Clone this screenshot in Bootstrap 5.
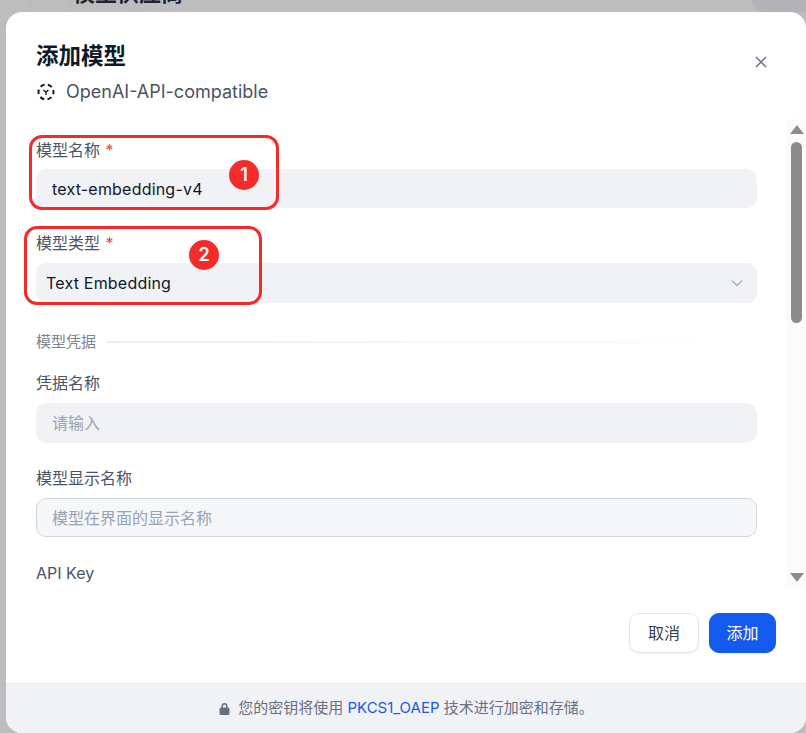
<!DOCTYPE html>
<html lang="zh-CN">
<head>
  <meta charset="UTF-8">
  <title>添加模型</title>
  <link href="https://cdn.jsdelivr.net/npm/bootstrap@5.3.0/dist/css/bootstrap.min.css" rel="stylesheet">
  <style>
    html, body { height: 733px; overflow: hidden; }
    body { background: #bcbdbc; font-family: Inter, "Noto Sans CJK SC", sans-serif; color: #354052; }
    .backdrop-page { height: 733px; padding: 12px 0 0 6px; position: relative; }
    .behind-panel { position: absolute; left: 30px; top: 0; width: 41px; height: 12px; border: solid #b4b5b4; border-width: 0 1px; }
    .behind-title { position: absolute; left: 73px; top: -23px; font-size: 22px; font-weight: 700; color: #1c2433; }
    .behind-pill { position: absolute; right: 0; top: -20px; width: 54px; height: 32px; background: #b1b3b6; border-radius: 0 0 0 12px; }
    .dialog-box { position: relative; height: 721px; background: #fff; border-radius: 16px; overflow: hidden; }
    .dialog-head { height: 107px; padding: 30px 30px 0; position: relative; }
    .dialog-title { font-size: 22.5px; line-height: 28px; font-weight: 700; color: #101828; margin: 0 0 9px; }
    .provider-line { font-size: 18px; line-height: 26px; color: #495464; gap: 10px; }
    .close-x { position: absolute; left: 749px; top: 44px; width: 12px; height: 12px; }
    .scroll-area { height: 468px; }
    .form-col { width: 781px; padding: 0 30px; overflow: hidden; }
    .field-wrap { height: 94px; padding-top: 19px; }
    .field-wrap.first { padding-top: 20px; }
    .field-wrap.tight { height: 95px; }
    .field-label { font-size: 16px; line-height: 22px; color: #495464; margin-bottom: 9px; display: block; }
    .field-wrap.first .field-label { margin-bottom: 8px; }
    .field-label i { color: #f04438; font-style: normal; margin-left: 1px; }
    .soft-input.form-control, .soft-input.form-select { height: 40px; border-radius: 10px; background-color: #f1f2f6; border: 1px solid #f1f2f6; font-size: 16px; letter-spacing: .2px; color: #101828; padding: 0 15px; box-shadow: none; }
    .soft-input.form-control.short-field { height: 39px; }
    .soft-input.form-select { padding-left: 9px; background-image: url("data:image/svg+xml,%3csvg xmlns='http://www.w3.org/2000/svg' viewBox='0 0 12 8'%3e%3cpath fill='none' stroke='%23a9aeb8' stroke-width='1.3' d='M1 1.5l5 5 5-5'/%3e%3c/svg%3e"); background-position: right 13px center; background-size: 12px 8px; }
    .soft-input.outlined { background-color: #f6f7f9; border-color: #d0d5dd; }
    .soft-input::placeholder { color: #98a2b3; opacity: 1; letter-spacing: 0; }
    .rule-row { height: 46px; font-size: 15px; color: #7a8494; gap: 10px; padding-top: 24px; }
    .rule-line { height: 2px; flex: 1; background: linear-gradient(to right, #eceef1, #fff); }
    .fake-scroll { width: 19px; background: #fbfbfb; position: relative; }
    .scroll-up { position: absolute; left: 3px; top: 6px; width: 0; height: 0; border: 7px solid transparent; border-top: 0; border-bottom: 9px solid #8c8c8c; }
    .scroll-down { position: absolute; left: 3px; top: 454px; width: 0; height: 0; border: 7px solid transparent; border-bottom: 0; border-top: 9px solid #8c8c8c; }
    .scroll-thumb { position: absolute; left: 4px; top: 23px; width: 11px; height: 181px; border-radius: 6px; background: #8c8c8c; }
    .action-row { height: 96px; padding: 26px 30px 0 0; gap: 10px; }
    .btn-cancel, .btn-add { height: 40px; border-radius: 10px; font-size: 16px; padding: 0; box-shadow: 0 1px 2px rgba(16,24,40,.06); }
    .btn-cancel { width: 70px; background: #fff; border: 1px solid #e1e3e8; color: #354052; }
    .btn-add { width: 67px; background: #155aef; border: 1px solid #155aef; color: #fff; }
    .lock-foot { height: 50px; background: #f1f2f6; border-top: 1px solid #e8eaee; font-size: 15px; color: #676f83; gap: 7px; }
    .lock-foot a { color: #155aef; text-decoration: none; }
    .mark-box { position: absolute; border: 3px solid #f52b2b; border-radius: 13px; pointer-events: none; }
    .mark-dot { position: absolute; width: 30px; height: 30px; border-radius: 50%; background: #f52b2b; color: #fff; font-size: 18px; font-weight: 600; line-height: 30px; text-align: center; }
  </style>
</head>
<body>
  <div class="backdrop-page">
    <div class="behind-panel"></div>
    <div class="behind-title">模型供应商</div>
    <div class="behind-pill"></div>

    <div class="dialog-box d-flex flex-column">
      <div class="dialog-head">
        <h1 class="dialog-title">添加模型</h1>
        <div class="provider-line d-flex align-items-center">
          <svg width="20" height="20" viewBox="0 0 20 20" fill="none" stroke="#101828" stroke-width="2">
            <circle cx="10" cy="10" r="7.500" stroke-dasharray="4.500 3.350" stroke-dashoffset="2.200"/>
            <path d="M7.500 8l2.500 2 2.500-2M10 10v3" stroke-width="1.400"/>
          </svg>
          <span>OpenAI-API-compatible</span>
        </div>
        <svg class="close-x" viewBox="0 0 12 12" fill="none" stroke="#676f83" stroke-width="1.500"><path d="M1 1l10 10M11 1L1 11"/></svg>
      </div>

      <div class="scroll-area d-flex">
        <div class="form-col">
          <div class="field-wrap first">
            <label class="field-label">模型名称 <i>*</i></label>
            <input class="form-control soft-input short-field" value="text-embedding-v4">
          </div>
          <div class="field-wrap">
            <label class="field-label">模型类型 <i>*</i></label>
            <select class="form-select soft-input"><option>Text Embedding</option></select>
          </div>
          <div class="rule-row d-flex align-items-center">
            <span>模型凭据</span>
            <div class="rule-line"></div>
          </div>
          <div class="field-wrap tight">
            <label class="field-label">凭据名称</label>
            <input class="form-control soft-input" placeholder="请输入">
          </div>
          <div class="field-wrap tight">
            <label class="field-label">模型显示名称</label>
            <input class="form-control soft-input outlined short-field" placeholder="模型在界面的显示名称">
          </div>
          <div class="field-wrap">
            <label class="field-label">API Key</label>
          </div>
        </div>
        <div class="fake-scroll ms-auto">
          <div class="scroll-up"></div>
          <div class="scroll-thumb"></div>
          <div class="scroll-down"></div>
        </div>
      </div>

      <div class="action-row d-flex justify-content-end">
        <button class="btn btn-cancel">取消</button>
        <button class="btn btn-add">添加</button>
      </div>

      <div class="lock-foot d-flex align-items-center justify-content-center">
        <svg width="13" height="14" viewBox="0 0 13 14"><path fill="#676f83" d="M3.500 5.500V4a3 3 0 0 1 6 0v1.500h.5a1.500 1.500 0 0 1 1.500 1.500v4.500A1.500 1.500 0 0 1 10 13H3a1.500 1.500 0 0 1-1.500-1.500V7A1.500 1.500 0 0 1 3 5.500zM5 5.500h3V4a1.500 1.500 0 0 0-3 0z"/></svg>
        <span>您的密钥将使用 <a href="#">PKCS1_OAEP</a> 技术进行加密和存储。</span>
      </div>
    </div>

    <div class="mark-box" style="left:29px;top:135px;width:250px;height:75px"></div>
    <div class="mark-dot" style="left:229px;top:160px">1</div>
    <div class="mark-box" style="left:24px;top:226px;width:238px;height:79px"></div>
    <div class="mark-dot" style="left:189px;top:240px">2</div>
  </div>
</body>
</html>
